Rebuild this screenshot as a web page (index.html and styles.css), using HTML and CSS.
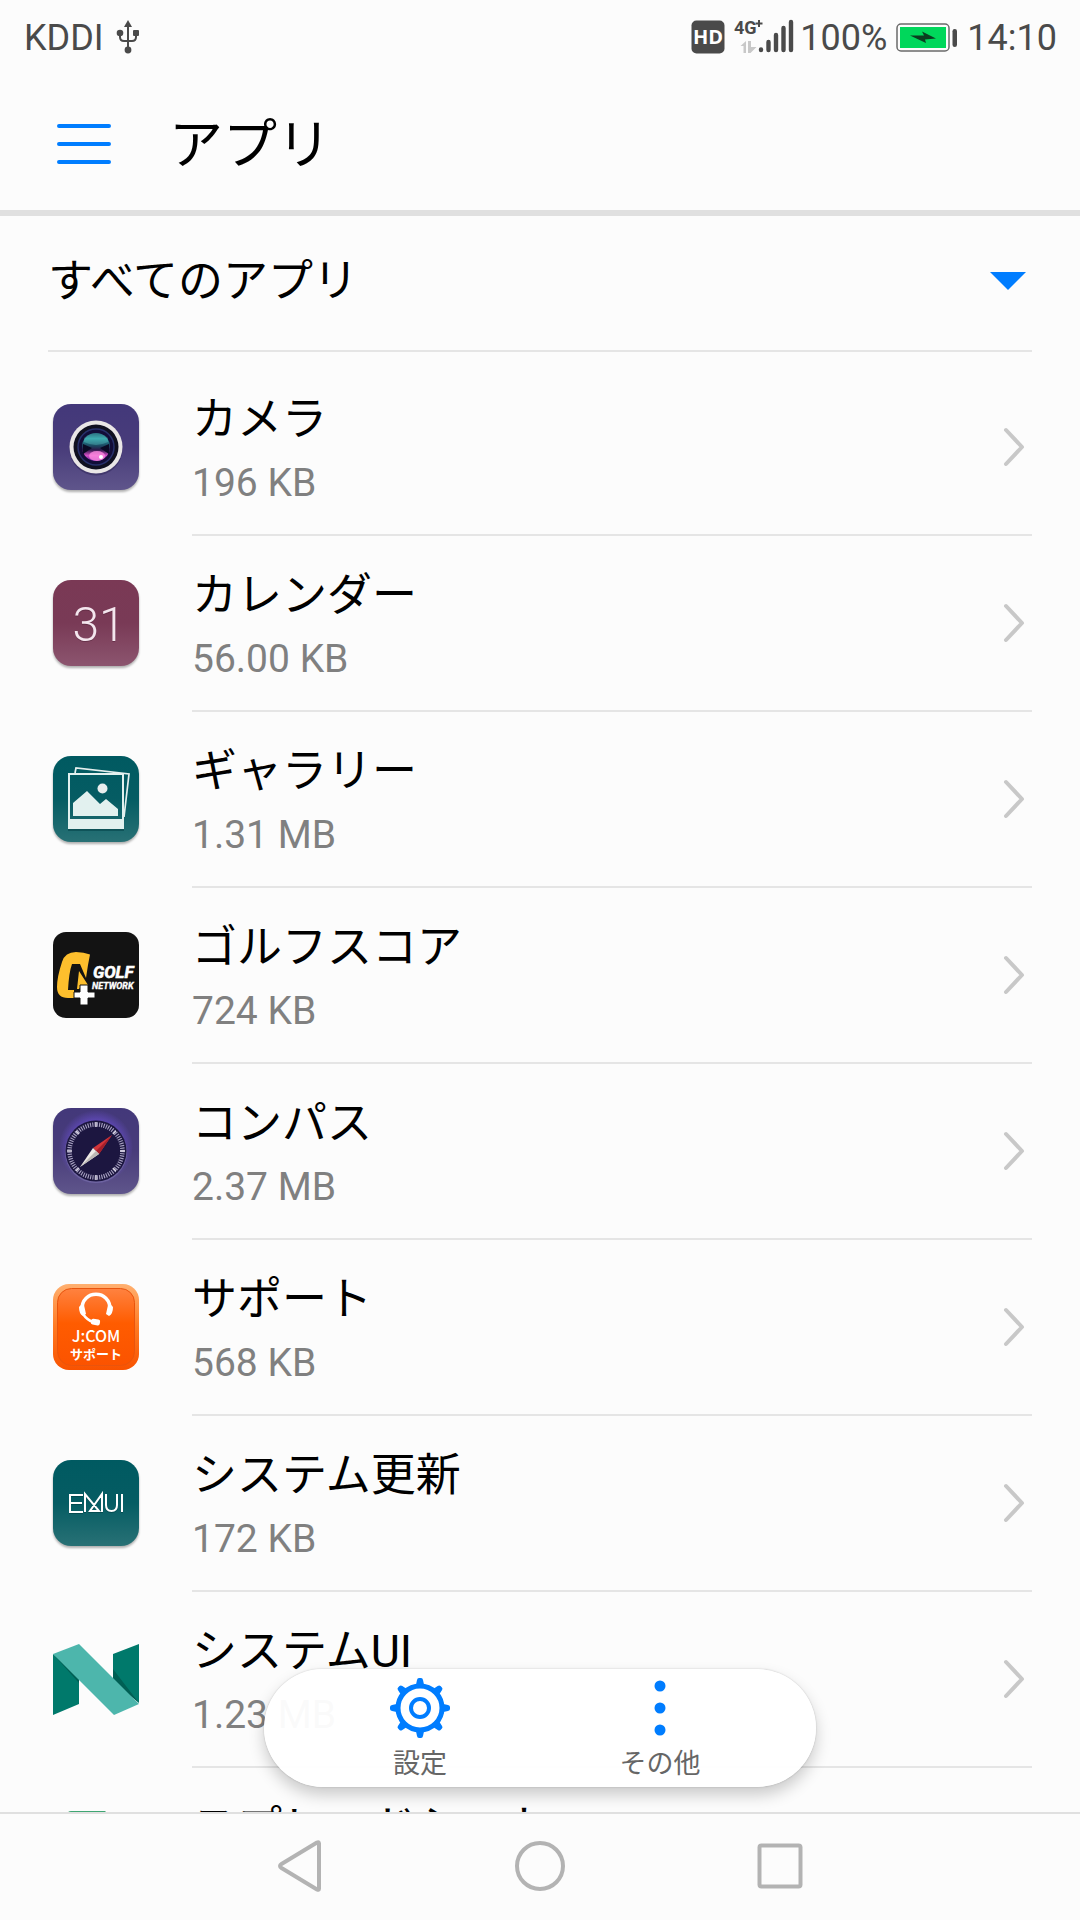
FILE: index.html
```html
<!DOCTYPE html>
<html lang="ja">
<head>
<meta charset="utf-8">
<meta name="viewport" content="width=device-width, initial-scale=1">
<title>アプリ</title>
<link rel="stylesheet" href="styles.css">
</head>
<body>
<div class="screen">
  <div class="status">
    <span>KDDI</span>
    <svg class="usb" width="24" height="36" viewBox="0 0 24 36">
      <g fill="none" stroke="#4a4a4a" stroke-width="2"><path d="M12 5v26M4 14v4q0 4 4 4h8q4 0 4-4v-4"/></g>
      <g fill="#4a4a4a"><path d="M12 1l4 7H8z"/><circle cx="4" cy="14" r="3.3"/><rect x="17" y="11" width="6" height="6" rx="1"/><circle cx="12" cy="31" r="3.4"/></g>
    </svg>
    <span class="status-space"></span>
    <svg class="hd" width="34" height="34" viewBox="0 0 34 34">
      <rect x="0.5" y="0.5" width="33" height="33" rx="5" fill="#4a4a4a"/>
      <text x="17" y="24" text-anchor="middle" font-family="Open Sans" font-weight="700" font-size="20" fill="#fff">HD</text>
    </svg>
    <svg class="signal" width="60" height="36" viewBox="0 0 60 36">
      <text x="0" y="16" font-family="Liberation Sans Narrow, Roboto" font-weight="700" font-size="18" fill="#4a4a4a">4G</text>
      <path d="M25 2v7M21.500 5.500h7" stroke="#4a4a4a" stroke-width="2"/>
      <path d="M12 23v12H9.500V28H6.500zM14 35V23h3v6h5.500l-6 6z" fill="#c8c8c8"/>
      <g stroke="#4a4a4a" stroke-width="4.400" stroke-linecap="round"><path d="M27 31.500v.5M34.500 24v8M42 17v15M49.500 10v22M57 4v28"/></g>
    </svg>
    <span class="percent">100%</span>
    <svg class="battery" width="62" height="30" viewBox="0 0 62 30">
      <rect x="1" y="1" width="52" height="27" rx="4" fill="none" stroke="#6a6a6a" stroke-width="1.500"/>
      <rect x="4" y="4" width="46" height="21" fill="#00d75b"/>
      <path d="M14 12.500l14 0-2-4 14 7-11 1 1 3.500z" fill="#0b3d20"/>
      <rect x="56.500" y="6" width="4.500" height="18" rx="2.200" fill="#4a4a4a"/>
    </svg>
    <span>14:10</span>
  </div>

  <header class="appbar">
    <button class="menu" type="button" aria-label="メニュー">
      <svg width="54" height="42" viewBox="0 0 54 42"><path d="M2 3h50M2 21h50M2 39h50" stroke="#007dff" stroke-width="4" stroke-linecap="round"/></svg>
    </button>
    <h1>アプリ</h1>
  </header>

  <main class="content">
    <div class="scroll">
      <div class="filter">
        <select class="filter-select" aria-label="表示するアプリ"><option>すべてのアプリ</option></select>
        <svg class="caret" width="36" height="18" viewBox="0 0 36 18"><path d="M0 0h36L18 18z" fill="#007dff"/></svg>
      </div>
      <ul class="apps">
        <li class="app"><a class="row" href="#camera">
          <svg class="icon" viewBox="0 0 86 86">
            <defs>
              <linearGradient id="purple" x2="0" y2="1"><stop stop-color="#43387a"/><stop offset=".5" stop-color="#483c7a"/><stop offset="1" stop-color="#5f558b"/></linearGradient>
              <linearGradient id="lens" x2="0" y2="1"><stop stop-color="#12455e"/><stop offset=".2" stop-color="#2b96a0"/><stop offset=".45" stop-color="#1b4a62"/><stop offset=".6" stop-color="#2b1848"/><stop offset=".8" stop-color="#d650c8"/><stop offset="1" stop-color="#7020a0"/></linearGradient>
            </defs>
            <rect width="86" height="86" rx="18" fill="url(#purple)"/>
            <circle cx="43" cy="45" r="26.500" fill="#2d2455" opacity=".5"/>
            <circle cx="43" cy="43" r="26.500" fill="#e9e6e6"/>
            <circle cx="43" cy="43" r="22.500" fill="#101020"/>
            <circle cx="43" cy="43" r="18" fill="#120d38" stroke="#27306a" stroke-width="1.500"/>
            <circle cx="43" cy="43" r="14" fill="url(#lens)"/>
            <path d="M31 34q12-10 24 0v4q-12 6-24 0z" fill="#6adbd4" opacity=".3"/>
            <path d="M30 40l9 4-9 6zM56 40l-9 4 9 6z" fill="#0a0a24"/>
            <ellipse cx="44" cy="52" rx="8" ry="5" fill="#ff8be0" opacity=".8"/>
            <circle cx="48" cy="53" r="2" fill="#fff"/>
          </svg>
          <span class="label"><span class="name">カメラ</span><span class="size">196 KB</span></span>
          <svg class="chevron" viewBox="0 0 22 40"><path d="M3 3l16 17L3 37"/></svg>
        </a></li>
        <li class="app"><a class="row" href="#calendar">
          <svg class="icon" viewBox="0 0 86 86">
            <defs><linearGradient id="wine" x2="0" y2="1"><stop stop-color="#7a3955"/><stop offset=".5" stop-color="#793a56"/><stop offset="1" stop-color="#8c556f"/></linearGradient></defs>
            <rect width="86" height="86" rx="18" fill="url(#wine)"/>
            <text x="46" y="62" text-anchor="middle" font-family="Roboto" font-weight="300" font-size="48" fill="#4e2036" opacity=".5" aria-hidden="true">31</text>
            <text x="46" y="61" text-anchor="middle" font-family="Roboto" font-weight="300" font-size="48" fill="#f4e6ee">31</text>
          </svg>
          <span class="label"><span class="name">カレンダー</span><span class="size">56.00 KB</span></span>
          <svg class="chevron" viewBox="0 0 22 40"><path d="M3 3l16 17L3 37"/></svg>
        </a></li>
        <li class="app"><a class="row" href="#gallery">
          <svg class="icon" viewBox="0 0 86 86">
            <defs><linearGradient id="teal" x2="0" y2="1"><stop stop-color="#005a61"/><stop offset=".5" stop-color="#055c63"/><stop offset="1" stop-color="#287175"/></linearGradient></defs>
            <rect width="86" height="86" rx="18" fill="url(#teal)"/>
            <path d="M15 75h56v-2H15z" fill="#003c42" opacity=".5"/>
            <path d="M22 17l1-5 53 6-5 43" fill="none" stroke="#e4efee" stroke-width="1.700"/>
            <path fill-rule="evenodd" d="M15 17h56v56H15zM17 19v44h52V19z" fill="#e2f1ef"/>
            <path d="M20 60V47l14-12 13 13 6-5 12 10v7z" fill="#e2f1ef"/>
            <circle cx="49.500" cy="32.500" r="5" fill="#e9eeee"/>
          </svg>
          <span class="label"><span class="name">ギャラリー</span><span class="size">1.31 MB</span></span>
          <svg class="chevron" viewBox="0 0 22 40"><path d="M3 3l16 17L3 37"/></svg>
        </a></li>
        <li class="app"><a class="row" href="#golf">
          <svg class="icon flat" viewBox="0 0 86 86">
            <rect width="86" height="86" rx="13" fill="#131313"/>
            <path d="M37 22.500q-6-2.500-14-2.500-11 0-14 10-5 15-5 25 0 11 11 11h6v-8h-6q1-18 4-26h8l6 14 2-13z" fill="#fdbf2d"/>
            <path d="M26 39l9 14h-6l-3 4h-2z" fill="#fdbf2d"/>
            <path d="M27 53h8v7h7v6h-7v7h-8v-7h-6v-6h6z" fill="#fff" stroke="#131313" stroke-width="1"/>
            <text x="40" y="46" font-family="Liberation Sans Narrow, Roboto" font-weight="700" font-style="italic" font-size="17" fill="#fff" stroke="#fff" stroke-width=".6">GOLF</text>
            <text x="39" y="57" font-family="Liberation Sans Narrow, Roboto" font-weight="700" font-style="italic" font-size="9" fill="#fff" stroke="#fff" stroke-width=".3">NETWORK</text>
          </svg>
          <span class="label"><span class="name">ゴルフスコア</span><span class="size">724 KB</span></span>
          <svg class="chevron" viewBox="0 0 22 40"><path d="M3 3l16 17L3 37"/></svg>
        </a></li>
        <li class="app"><a class="row" href="#compass">
          <svg class="icon" viewBox="0 0 86 86">
            <defs><radialGradient id="glow"><stop offset=".75" stop-color="#6a4fd0"/><stop offset="1" stop-color="#6a4fd0" stop-opacity="0"/></radialGradient></defs>
            <rect width="86" height="86" rx="18" fill="url(#purple)"/>
            <circle cx="43" cy="39" r="37" fill="url(#glow)" opacity=".55"/>
            <circle cx="43" cy="44" r="31" fill="#6e64a0"/>
            <circle cx="43" cy="43" r="30.500" fill="#1c1640"/>
            <circle cx="43" cy="43" r="26.500" fill="none" stroke="#a9a3c2" stroke-width="4.500" stroke-dasharray="1.100 1.213"/>
            <path d="M43 14v5M43 67v5M14 43h5M67 43h5M23 23l3 3M60 60l3 3M23 63l3-3M60 26l3-3" stroke="#d8d4e4" stroke-width="1.500"/>
            <path d="M59 27L40 40l6 6z" fill="#d2353a"/><path d="M59 27L43 43l3 3z" fill="#a31f2b"/>
            <path d="M27 59l13-19 6 6z" fill="#eeeae6"/><path d="M27 59l16-16 3 3z" fill="#bcb8b5"/>
          </svg>
          <span class="label"><span class="name">コンパス</span><span class="size">2.37 MB</span></span>
          <svg class="chevron" viewBox="0 0 22 40"><path d="M3 3l16 17L3 37"/></svg>
        </a></li>
        <li class="app"><a class="row" href="#support">
          <svg class="icon flat" viewBox="0 0 86 86">
            <defs>
              <linearGradient id="rim" x2="0" y2="1"><stop stop-color="#ffb070"/><stop offset=".5" stop-color="#ff7a22"/><stop offset="1" stop-color="#f85200"/></linearGradient>
              <linearGradient id="face" x2="0" y2="1"><stop stop-color="#ff8240"/><stop offset=".45" stop-color="#ff5c00"/><stop offset="1" stop-color="#fb5300"/></linearGradient>
            </defs>
            <rect width="86" height="86" rx="16" fill="url(#rim)"/>
            <rect x="4.500" y="4.500" width="77" height="77" rx="14" fill="url(#face)" stroke="#e9540d" stroke-width="1"/>
            <path d="M29 26C28 5 58 5 57 26" fill="none" stroke="#fff" stroke-width="3.500"/>
            <path d="M26 23q2-3 5-2l2 9-3 2q-4-2-4-9zM60 23q-2-3-5-2l-2 9 3 2q4-2 4-9z" fill="#fff"/>
            <path d="M30 30q4 6 10 8" fill="none" stroke="#fff" stroke-width="2.500"/>
            <rect x="38" y="35" width="9" height="6" rx="2" fill="#fff" transform="rotate(10 42 38)"/>
            <text x="43" y="58" text-anchor="middle" font-family="Noto Sans CJK JP" font-weight="500" font-size="16" fill="#fff">J:COM</text>
            <text x="43" y="75" text-anchor="middle" font-family="Noto Sans CJK JP" font-weight="700" font-size="13" fill="#fff">サポート</text>
          </svg>
          <span class="label"><span class="name">サポート</span><span class="size">568 KB</span></span>
          <svg class="chevron" viewBox="0 0 22 40"><path d="M3 3l16 17L3 37"/></svg>
        </a></li>
        <li class="app"><a class="row" href="#update">
          <svg class="icon" viewBox="0 0 86 86">
            <rect width="86" height="86" rx="18" fill="url(#teal)"/>
            <g fill="none" stroke-width="2">
              <path d="M30 36H17v17h13M17 44h12M32 53V35l15 17H37l12-17v18M53 34v12q0 6 5.500 6t5.500-6V34M69 34v19" stroke="#003d42" opacity=".6"/>
              <path d="M30 35H17v17h13M17 43h12M32 52V34l14 17H37l12-17v18M53 34v11q0 6 5.500 6t5.500-6V34M69 34v18" stroke="#fff"/>
            </g>
          </svg>
          <span class="label"><span class="name">システム更新</span><span class="size">172 KB</span></span>
          <svg class="chevron" viewBox="0 0 22 40"><path d="M3 3l16 17L3 37"/></svg>
        </a></li>
        <li class="app"><a class="row" href="#systemui">
          <svg class="icon flat" viewBox="0 0 86 86">
            <path d="M0 18l26 26v24L0 79zM86 67L60 41V18L86 8z" fill="#00796b"/>
            <path d="M0 18l26 19v10zM86 67L60 33v13z" fill="#005f54"/>
            <path d="M0 18L26 8l60 60-25 11z" fill="#4db6ac"/>
          </svg>
          <span class="label"><span class="name">システムUI</span><span class="size">1.23 MB</span></span>
          <svg class="chevron" viewBox="0 0 22 40"><path d="M3 3l16 17L3 37"/></svg>
        </a></li>
        <li class="app"><a class="row" href="#sheets">
          <svg class="icon flat" viewBox="0 0 86 86"><path d="M18-1h34l20 20v62q0 5-5 5H19q-5 0-5-5V4q0-5 4-5z" fill="#3fa673"/></svg>
          <span class="label"><span class="name">スプレッドシート</span></span>
        </a></li>
      </ul>
    </div>

    <div class="toolbar">
      <button class="tool" type="button">
        <svg width="60" height="60" viewBox="0 0 60 60">
          <g fill="#007dff">
            <g id="teeth"><path id="t" d="M25.500 9l1.500-7q.3-2 2-2h2q1.700 0 2 2l1.500 7z"/><use href="#t" transform="rotate(90 30 30)"/><use href="#t" transform="rotate(180 30 30)"/><use href="#t" transform="rotate(270 30 30)"/></g>
            <use href="#teeth" transform="rotate(45 30 30)"/>
          </g>
          <g fill="none" stroke="#007dff"><circle cx="30" cy="30" r="22" stroke-width="5"/><circle cx="30" cy="30" r="9" stroke-width="4"/></g>
        </svg>
        <span>設定</span>
      </button>
      <button class="tool" type="button">
        <svg width="60" height="60" viewBox="0 0 60 60" fill="#007dff"><circle cx="30" cy="8" r="5.500"/><circle cx="30" cy="30" r="5.500"/><circle cx="30" cy="52" r="5.500"/></svg>
        <span>その他</span>
      </button>
    </div>
  </main>

  <nav class="navbar">
    <button type="button" aria-label="戻る"><svg width="52" height="52" viewBox="0 0 52 52"><path d="M45 3.500v45q0 2-2 1L7.500 28q-3-2 0-4L43 2.500q2-1 2 1z"/></svg></button>
    <button type="button" aria-label="ホーム"><svg width="52" height="52" viewBox="0 0 52 52"><circle cx="26" cy="26" r="23"/></svg></button>
    <button type="button" aria-label="履歴"><svg width="52" height="52" viewBox="0 0 52 52"><rect x="5.500" y="5.500" width="41" height="41" rx="2"/></svg></button>
  </nav>
</div>
</body>
</html>
```
FILE: styles.css
```css
* {
  box-sizing: border-box;
}

body {
  margin: 0;
  background: #fcfcfc;
  color: #000;
  font-family: Roboto, "Noto Sans CJK JP", sans-serif;
}

button {
  padding: 0;
  border: 0;
  background: none;
  font: inherit;
  color: inherit;
}

svg {
  display: block;
  flex: none;
}

.screen {
  display: flex;
  flex-direction: column;
  height: 100vh;
}

.status {
  display: flex;
  align-items: center;
  height: 72px;
  padding: 4px 23px 0 24px;
  font-size: 36px;
  line-height: 42px;
  color: #4a4a4a;
}

.usb {
  margin: 0 0 2px 12px;
}

.status-space {
  flex: 1;
}

.hd {
  margin-bottom: 2px;
}

.signal {
  margin: 0 0 4px 9px;
  overflow: visible;
}

.percent {
  margin-left: 6px;
}

.battery {
  margin: 0 9px 0 9px;
}

.appbar {
  display: flex;
  align-items: center;
  gap: 58px;
  height: 144px;
  padding: 6px 0 0 57px;
  border-bottom: 6px solid #e0e0e0;
}

.appbar h1 {
  margin: 0;
  padding-top: 4px;
  font-size: 54px;
  font-weight: 400;
  line-height: 72px;
}

.content {
  position: relative;
  flex: 1;
  min-height: 0;
}

.scroll {
  height: 100%;
  overflow-y: auto;
  scrollbar-width: none;
}

.filter {
  position: relative;
  display: flex;
  align-items: center;
  height: 136px;
  margin: 0 48px;
  padding-bottom: 4px;
  border-bottom: 2px solid #e5e5e5;
}

.filter-select {
  flex: 1;
  height: 72px;
  padding: 0;
  border: 0;
  appearance: none;
  background: none;
  font: inherit;
  font-size: 45px;
  color: inherit;
}

.caret {
  position: absolute;
  right: 6px;
  pointer-events: none;
}

.apps {
  margin: 0;
  padding: 8px 48px 0 53px;
  list-style: none;
}

.row {
  display: flex;
  color: inherit;
  text-decoration: none;
}

.icon {
  width: 86px;
  height: 86px;
  margin: 44px 53px 0 0;
  overflow: visible;
  filter: drop-shadow(0 2px 1px rgba(0, 0, 0, 0.3));
}

.icon.flat {
  filter: none;
}

.label {
  display: flex;
  flex: 1;
  flex-direction: column;
  gap: 7px;
  height: 176px;
  padding-top: 30px;
  border-bottom: 2px solid #e5e5e5;
}

.name {
  font-size: 45px;
  line-height: 60px;
}

.size {
  font-size: 39px;
  line-height: 52px;
  color: #808080;
}

.chevron {
  width: 22px;
  height: 174px;
  margin-left: -29px;
  margin-right: 7px;
  fill: none;
  stroke: #c8c8c8;
  stroke-width: 4;
  stroke-linecap: round;
  stroke-linejoin: round;
}

.toolbar {
  position: absolute;
  bottom: 25px;
  left: 50%;
  display: flex;
  width: 552px;
  padding: 9px 36px 5px;
  transform: translateX(-50%);
  border-radius: 60px;
  background: rgba(255, 255, 255, 0.96);
  box-shadow: 0 0 2px rgba(0, 0, 0, 0.2), 0 8px 16px rgba(0, 0, 0, 0.2);
}

.tool {
  display: flex;
  flex: 1;
  flex-direction: column;
  align-items: center;
  gap: 9px;
  font-size: 27px;
  line-height: 35px;
  color: #666;
}

.navbar {
  display: flex;
  justify-content: center;
  height: 108px;
  padding-bottom: 2px;
  border-top: 2px solid #e0e0e0;
}

.navbar button {
  display: flex;
  align-items: center;
  justify-content: center;
  width: 240px;
}

.navbar svg {
  fill: none;
  stroke: #b3b3b3;
  stroke-width: 4;
  stroke-linejoin: round;
}
```
